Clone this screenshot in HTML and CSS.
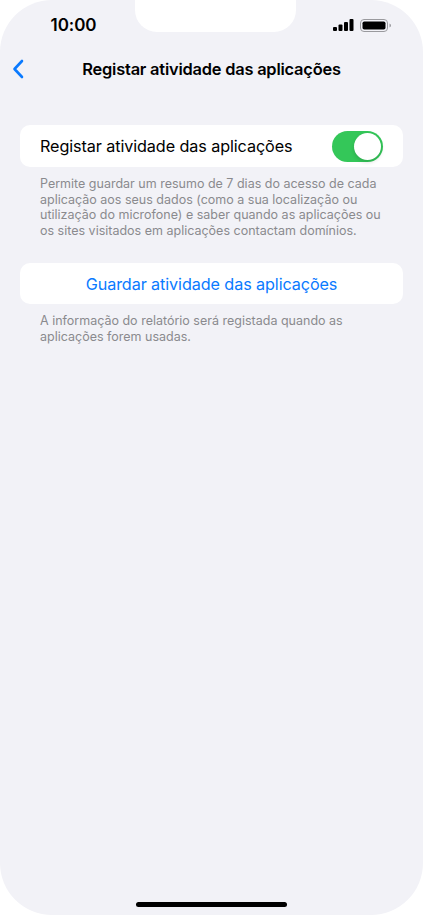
FILE: index.html
```html
<!DOCTYPE html>
<html lang="pt">
<head>
<meta charset="utf-8">
<title>Registar atividade das aplicações</title>
<link rel="stylesheet" href="styles.css">
</head>
<body>
<div class="phone">

  <div class="status-bar">
    <div class="status-left">10:00</div>
    <div class="notch"></div>
    <div class="status-right">
      <svg class="signal" width="21" height="12" viewBox="0 0 21 12">
        <rect x="0" y="8" width="4" height="4" rx="1"/>
        <rect x="5.5" y="5.5" width="4" height="6.5" rx="1"/>
        <rect x="11" y="3" width="4" height="9" rx="1"/>
        <rect x="16.5" y="0" width="4" height="12" rx="1"/>
      </svg>
      <svg class="battery" width="31" height="13" viewBox="0 0 31 13">
        <rect x="0.5" y="0.5" width="27" height="12" rx="3.5" fill="none" stroke="#9a9a9e"/>
        <rect x="2.5" y="2.5" width="23" height="8" rx="1.8" fill="#000"/>
        <path d="M29.5 4.5 Q31 5 31 6.5 Q31 8 29.5 8.5 Z" fill="#9a9a9e"/>
      </svg>
    </div>
  </div>

  <div class="nav-bar">
    <svg class="back" width="12" height="20" viewBox="0 0 12 20">
      <path d="M10 2 L2.5 10 L10 18" fill="none" stroke="#0a7aff" stroke-width="2.6" stroke-linecap="round" stroke-linejoin="round"/>
    </svg>
    <div class="nav-title">Registar atividade das aplicações</div>
  </div>

  <div class="content">
    <div class="card toggle-row">
      <span class="label">Registar atividade das aplicações</span>
      <span class="switch"><span class="knob"></span></span>
    </div>
    <p class="footer">Permite guardar um resumo de 7 dias do acesso de cada<br>aplicação aos seus dados (como a sua localização ou<br>utilização do microfone) e saber quando as aplicações ou<br>os sites visitados em aplicações contactam domínios.</p>

    <div class="card button-row">Guardar atividade das aplicações</div>
    <p class="footer">A informação do relatório será registada quando as<br>aplicações forem usadas.</p>
  </div>

  <div class="home-area">
    <div class="home-indicator"></div>
  </div>

</div>
</body>
</html>
```

FILE: styles.css
```css
html, body {
   margin: 0;
   padding: 0;
   background-color: white;
}

body {
   font-family: Inter, "Noto Sans", sans-serif;
   color: #000;
}

.phone {
   width: 423px;
   height: 915px;
   background-color: #f2f2f7;
   border-radius: 52px;
   overflow: hidden;
   display: flex;
   flex-direction: column;
}

/* status bar */

.status-bar {
   display: flex;
   height: 46px;
}

.status-left,
.status-right {
   flex: 1;
   display: flex;
   align-items: center;
   justify-content: center;
   padding-top: 4px;
}

.status-left {
   font-size: 17px;
   font-weight: 600;
   padding-left: 12px;
   letter-spacing: -0.1px;
}

.status-right {
   gap: 6px;
   padding-left: 4px;
}

.notch {
   width: 161px;
   height: 32px;
   background-color: white;
   border-radius: 0 0 22px 22px;
}

/* nav bar */

.nav-bar {
   display: flex;
   align-items: center;
   justify-content: center;
   height: 46px;
   position: relative;
}

.back {
   position: absolute;
   left: 12px;
   top: 13px;
}

.nav-title {
   font-size: 16.4px;
   font-weight: 600;
   letter-spacing: -0.2px;
}

/* list */

.content {
   padding: 33px 20px 0;
   flex: 1;
}

.card {
   background-color: white;
   border-radius: 10px;
}

.toggle-row {
   display: flex;
   align-items: center;
   justify-content: space-between;
   height: 42px;
   padding: 0 20px;
   font-size: 16.2px;
   letter-spacing: -0.1px;
}

.switch {
   width: 51px;
   height: 31px;
   border-radius: 16px;
   background-color: #34c759;
   display: flex;
   align-items: center;
   justify-content: flex-end;
   padding: 0 2px;
   box-sizing: border-box;
}

.knob {
   width: 27px;
   height: 27px;
   border-radius: 50%;
   background-color: white;
   box-shadow: 0 2px 4px rgba(0, 0, 0, 0.15);
}

.footer {
   margin: 0;
   padding: 9px 20px 0;
   font-size: 12.5px;
   line-height: 15.5px;
   color: #8a8a8e;
   white-space: nowrap;
}

.button-row {
   margin-top: 25px;
   height: 41px;
   display: flex;
   align-items: center;
   justify-content: center;
   color: #0a7aff;
   font-size: 16.2px;
   letter-spacing: -0.1px;
}

/* home indicator */

.home-area {
   height: 13px;
   display: flex;
   justify-content: center;
}

.home-indicator {
   width: 151px;
   height: 5px;
   border-radius: 3px;
   background-color: #000;
}
```
